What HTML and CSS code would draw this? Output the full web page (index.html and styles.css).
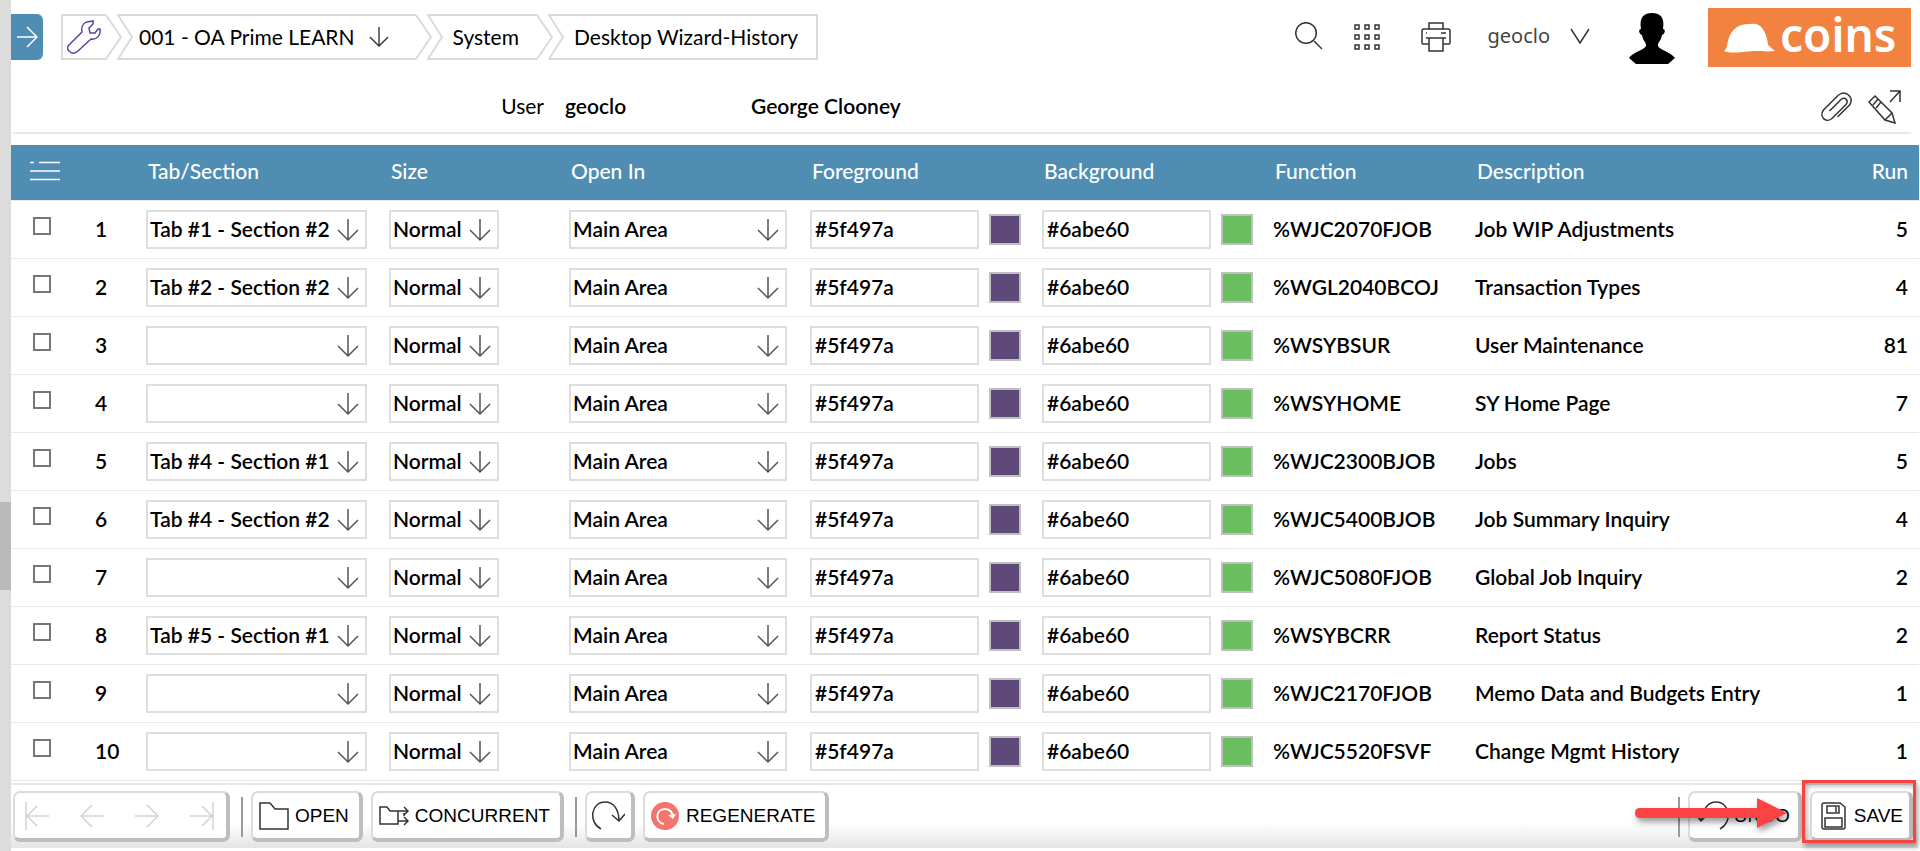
FILE: index.html
```
<!DOCTYPE html>
<html lang="en">
<head>
<meta charset="utf-8">
<title>Desktop Wizard-History</title>
<link rel="stylesheet" href="styles.css">
</head>
<body>
<svg class="sprite" aria-hidden="true">
  <symbol id="i-down" viewBox="0 0 22 24"><path d="M11 1v21M1 12l10 10 10-10"/></symbol>
  <symbol id="i-notch" viewBox="0 0 16 46"><path d="M16 1H1l14 22L1 45h15"/></symbol>
  <symbol id="i-tip" viewBox="0 0 16 46"><path d="M0 1l15 22L0 45"/></symbol>
</svg>
<div class="rail" aria-hidden="true"><div class="thumb"></div></div>
<main class="page">
  <header class="topbar">
    <button class="toggle" aria-label="Expand menu"><svg width="22" height="22" viewBox="0 0 22 22"><path d="M1 11h20M11 1l10 10-10 10"/></svg></button>
    <nav class="crumbs" aria-label="Breadcrumb">
      <a class="crumb first" href="#" aria-label="Home"><span class="body"><svg class="wrench" width="34" height="34" viewBox="0 0 34 34"><path d="M2 31c-2-2-2-4 0-6l13-13c-1-5 1-9 5-10l6-1v3l-4 4 1 5h5l3-4h2c1 6-3 11-9 10L11 31c-3 3-6 3-9 0z"/></svg></span><svg class="edge"><use href="#i-tip"/></svg></a>
      <a class="crumb" href="#"><svg class="edge"><use href="#i-notch"/></svg><span class="body company">001 - OA Prime LEARN <svg class="arrow" width="20" height="22"><use href="#i-down"/></svg></span><svg class="edge"><use href="#i-tip"/></svg></a>
      <a class="crumb" href="#"><svg class="edge"><use href="#i-notch"/></svg><span class="body system">System</span><svg class="edge"><use href="#i-tip"/></svg></a>
      <a class="crumb last" href="#"><svg class="edge"><use href="#i-notch"/></svg><span class="body">Desktop Wizard-History</span></a>
    </nav>
    <div class="tools">
      <button class="icon" aria-label="Search"><svg width="28" height="28" viewBox="0 0 28 28"><circle cx="11" cy="11" r="10.300"/><path d="M19 19l8 8"/></svg></button>
      <button class="icon apps" aria-label="Applications"><svg width="26" height="26" viewBox="0 0 26 26"><path d="M1 1h4v4H1zM11 1h4v4h-4zM21 1h4v4h-4zM1 11h4v4H1zM11 11h4v4h-4zM21 11h4v4h-4zM1 21h4v4H1zM11 21h4v4h-4zM21 21h4v4h-4z"/></svg></button>
      <button class="icon print" aria-label="Print"><svg width="30" height="30" viewBox="0 0 30 30"><path d="M8 7V1h14v6M8 22H2q-1 0-1-1V9q0-2 2-2h24q2 0 2 2v12q0 1-1 1h-6M5 16h20M8 16h14v13H8zM20 11h5M5 11h1"/></svg></button>
      <button class="icon account">geoclo <svg width="20" height="16" viewBox="0 0 20 16"><path d="M1 1l9 14 9-14"/></svg></button>
      <svg class="avatar" width="46" height="52" viewBox="0 0 46 52" role="img" aria-label="Profile"><path d="M12 17C10 5 15 1 23 1s13 4 11 16c3 0 2 5-1 6-1 6-4 7-4 10 0 5 10 5 17 13l-7 6H7l-7-6c7-8 17-8 17-13 0-3-3-4-4-10-3-1-4-6-1-6z"/></svg>
      <div class="logo"><svg width="52" height="30" viewBox="0 0 52 30" aria-hidden="true"><path d="M0 28q2-1 3-5C5 8 12 1 26 1c6-1 10 1 12 4q5 6 6 17l7 6c-8 1-13 0-22 0-12 1-22 3-29 0z"/></svg><span>coins</span></div>
    </div>
  </header>

  <section class="userbar">
    <span class="label">User</span><b class="uid">geoclo</b><b class="uname">George Clooney</b>
    <div class="actions">
      <button class="icon" aria-label="Attachments"><svg width="31" height="30" viewBox="0 0 31 30"><path d="M8.500 19L20 7.500c4-3 8 1 5 5L11.500 26c-6 6-14-1-9-8L17 3.500c7-6 16 1 12 9L16.500 25"/></svg></button>
      <button class="icon" aria-label="Edit in new window"><svg width="34" height="34" viewBox="0 0 34 34"><path d="M1 12l6-6 17 17 3 10-10-3L1 12zM5 15l5-6M8 18l5-6M17 30l7-7M22 1h10v11M32 1L22 12"/></svg></button>
    </div>
  </section>

  <table class="grid">
    <colgroup><col class="c-check"><col class="c-num"><col class="c-tab"><col class="c-size"><col class="c-open"><col class="c-fore"><col class="c-back"><col class="c-func"><col><col class="c-run"></colgroup>
    <thead><tr>
      <th scope="col" class="check"><button class="icon list" aria-label="Row options"><svg width="30" height="20" viewBox="0 0 30 20"><path d="M0 1.500h4M9 1.500h21M0 10h30M0 18.500h30"/></svg></button></th>
      <th></th><th scope="col">Tab/Section</th><th scope="col">Size</th><th scope="col">Open In</th><th scope="col">Foreground</th><th scope="col">Background</th><th scope="col">Function</th><th scope="col">Description</th><th scope="col" class="run">Run</th>
    </tr></thead>
    <tbody>
      <tr><td class="check"><input type="checkbox" aria-label="Select row 1"></td><td>1</td><td><span class="pick"><select aria-label="Tab/Section 1"><option>Tab #1 - Section #2</option></select><svg><use href="#i-down"/></svg></span></td><td><span class="pick"><select aria-label="Size 1"><option>Normal</option></select><svg><use href="#i-down"/></svg></span></td><td><span class="pick"><select aria-label="Open In 1"><option>Main Area</option></select><svg><use href="#i-down"/></svg></span></td><td><span class="hex"><input type="text" value="#5f497a" aria-label="Foreground 1"><button class="swatch fg" aria-label="Pick foreground 1"></button></span></td><td><span class="hex"><input type="text" value="#6abe60" aria-label="Background 1"><button class="swatch bg" aria-label="Pick background 1"></button></span></td><td>%WJC2070FJOB</td><td>Job WIP Adjustments</td><td class="run">5</td></tr>
      <tr><td class="check"><input type="checkbox" aria-label="Select row 2"></td><td>2</td><td><span class="pick"><select aria-label="Tab/Section 2"><option>Tab #2 - Section #2</option></select><svg><use href="#i-down"/></svg></span></td><td><span class="pick"><select aria-label="Size 2"><option>Normal</option></select><svg><use href="#i-down"/></svg></span></td><td><span class="pick"><select aria-label="Open In 2"><option>Main Area</option></select><svg><use href="#i-down"/></svg></span></td><td><span class="hex"><input type="text" value="#5f497a" aria-label="Foreground 2"><button class="swatch fg" aria-label="Pick foreground 2"></button></span></td><td><span class="hex"><input type="text" value="#6abe60" aria-label="Background 2"><button class="swatch bg" aria-label="Pick background 2"></button></span></td><td>%WGL2040BCOJ</td><td>Transaction Types</td><td class="run">4</td></tr>
      <tr><td class="check"><input type="checkbox" aria-label="Select row 3"></td><td>3</td><td><span class="pick"><select aria-label="Tab/Section 3"><option></option></select><svg><use href="#i-down"/></svg></span></td><td><span class="pick"><select aria-label="Size 3"><option>Normal</option></select><svg><use href="#i-down"/></svg></span></td><td><span class="pick"><select aria-label="Open In 3"><option>Main Area</option></select><svg><use href="#i-down"/></svg></span></td><td><span class="hex"><input type="text" value="#5f497a" aria-label="Foreground 3"><button class="swatch fg" aria-label="Pick foreground 3"></button></span></td><td><span class="hex"><input type="text" value="#6abe60" aria-label="Background 3"><button class="swatch bg" aria-label="Pick background 3"></button></span></td><td>%WSYBSUR</td><td>User Maintenance</td><td class="run">81</td></tr>
      <tr><td class="check"><input type="checkbox" aria-label="Select row 4"></td><td>4</td><td><span class="pick"><select aria-label="Tab/Section 4"><option></option></select><svg><use href="#i-down"/></svg></span></td><td><span class="pick"><select aria-label="Size 4"><option>Normal</option></select><svg><use href="#i-down"/></svg></span></td><td><span class="pick"><select aria-label="Open In 4"><option>Main Area</option></select><svg><use href="#i-down"/></svg></span></td><td><span class="hex"><input type="text" value="#5f497a" aria-label="Foreground 4"><button class="swatch fg" aria-label="Pick foreground 4"></button></span></td><td><span class="hex"><input type="text" value="#6abe60" aria-label="Background 4"><button class="swatch bg" aria-label="Pick background 4"></button></span></td><td>%WSYHOME</td><td>SY Home Page</td><td class="run">7</td></tr>
      <tr><td class="check"><input type="checkbox" aria-label="Select row 5"></td><td>5</td><td><span class="pick"><select aria-label="Tab/Section 5"><option>Tab #4 - Section #1</option></select><svg><use href="#i-down"/></svg></span></td><td><span class="pick"><select aria-label="Size 5"><option>Normal</option></select><svg><use href="#i-down"/></svg></span></td><td><span class="pick"><select aria-label="Open In 5"><option>Main Area</option></select><svg><use href="#i-down"/></svg></span></td><td><span class="hex"><input type="text" value="#5f497a" aria-label="Foreground 5"><button class="swatch fg" aria-label="Pick foreground 5"></button></span></td><td><span class="hex"><input type="text" value="#6abe60" aria-label="Background 5"><button class="swatch bg" aria-label="Pick background 5"></button></span></td><td>%WJC2300BJOB</td><td>Jobs</td><td class="run">5</td></tr>
      <tr><td class="check"><input type="checkbox" aria-label="Select row 6"></td><td>6</td><td><span class="pick"><select aria-label="Tab/Section 6"><option>Tab #4 - Section #2</option></select><svg><use href="#i-down"/></svg></span></td><td><span class="pick"><select aria-label="Size 6"><option>Normal</option></select><svg><use href="#i-down"/></svg></span></td><td><span class="pick"><select aria-label="Open In 6"><option>Main Area</option></select><svg><use href="#i-down"/></svg></span></td><td><span class="hex"><input type="text" value="#5f497a" aria-label="Foreground 6"><button class="swatch fg" aria-label="Pick foreground 6"></button></span></td><td><span class="hex"><input type="text" value="#6abe60" aria-label="Background 6"><button class="swatch bg" aria-label="Pick background 6"></button></span></td><td>%WJC5400BJOB</td><td>Job Summary Inquiry</td><td class="run">4</td></tr>
      <tr><td class="check"><input type="checkbox" aria-label="Select row 7"></td><td>7</td><td><span class="pick"><select aria-label="Tab/Section 7"><option></option></select><svg><use href="#i-down"/></svg></span></td><td><span class="pick"><select aria-label="Size 7"><option>Normal</option></select><svg><use href="#i-down"/></svg></span></td><td><span class="pick"><select aria-label="Open In 7"><option>Main Area</option></select><svg><use href="#i-down"/></svg></span></td><td><span class="hex"><input type="text" value="#5f497a" aria-label="Foreground 7"><button class="swatch fg" aria-label="Pick foreground 7"></button></span></td><td><span class="hex"><input type="text" value="#6abe60" aria-label="Background 7"><button class="swatch bg" aria-label="Pick background 7"></button></span></td><td>%WJC5080FJOB</td><td>Global Job Inquiry</td><td class="run">2</td></tr>
      <tr><td class="check"><input type="checkbox" aria-label="Select row 8"></td><td>8</td><td><span class="pick"><select aria-label="Tab/Section 8"><option>Tab #5 - Section #1</option></select><svg><use href="#i-down"/></svg></span></td><td><span class="pick"><select aria-label="Size 8"><option>Normal</option></select><svg><use href="#i-down"/></svg></span></td><td><span class="pick"><select aria-label="Open In 8"><option>Main Area</option></select><svg><use href="#i-down"/></svg></span></td><td><span class="hex"><input type="text" value="#5f497a" aria-label="Foreground 8"><button class="swatch fg" aria-label="Pick foreground 8"></button></span></td><td><span class="hex"><input type="text" value="#6abe60" aria-label="Background 8"><button class="swatch bg" aria-label="Pick background 8"></button></span></td><td>%WSYBCRR</td><td>Report Status</td><td class="run">2</td></tr>
      <tr><td class="check"><input type="checkbox" aria-label="Select row 9"></td><td>9</td><td><span class="pick"><select aria-label="Tab/Section 9"><option></option></select><svg><use href="#i-down"/></svg></span></td><td><span class="pick"><select aria-label="Size 9"><option>Normal</option></select><svg><use href="#i-down"/></svg></span></td><td><span class="pick"><select aria-label="Open In 9"><option>Main Area</option></select><svg><use href="#i-down"/></svg></span></td><td><span class="hex"><input type="text" value="#5f497a" aria-label="Foreground 9"><button class="swatch fg" aria-label="Pick foreground 9"></button></span></td><td><span class="hex"><input type="text" value="#6abe60" aria-label="Background 9"><button class="swatch bg" aria-label="Pick background 9"></button></span></td><td>%WJC2170FJOB</td><td>Memo Data and Budgets Entry</td><td class="run">1</td></tr>
      <tr><td class="check"><input type="checkbox" aria-label="Select row 10"></td><td>10</td><td><span class="pick"><select aria-label="Tab/Section 10"><option></option></select><svg><use href="#i-down"/></svg></span></td><td><span class="pick"><select aria-label="Size 10"><option>Normal</option></select><svg><use href="#i-down"/></svg></span></td><td><span class="pick"><select aria-label="Open In 10"><option>Main Area</option></select><svg><use href="#i-down"/></svg></span></td><td><span class="hex"><input type="text" value="#5f497a" aria-label="Foreground 10"><button class="swatch fg" aria-label="Pick foreground 10"></button></span></td><td><span class="hex"><input type="text" value="#6abe60" aria-label="Background 10"><button class="swatch bg" aria-label="Pick background 10"></button></span></td><td>%WJC5520FSVF</td><td>Change Mgmt History</td><td class="run">1</td></tr>
    </tbody>
  </table>

  <footer class="footer">
    <div class="box pager">
      <button aria-label="First page" disabled><svg width="24" height="28" viewBox="0 0 24 28"><path d="M1 0v28M2 14h22M12 4L2 14l10 10"/></svg></button>
      <button aria-label="Previous page" disabled><svg width="24" height="28" viewBox="0 0 24 28"><path d="M1 14h23M12 3L1 14l11 11"/></svg></button>
      <button aria-label="Next page" disabled><svg width="24" height="28" viewBox="0 0 24 28"><path d="M0 14h23M12 3l11 11-11 11"/></svg></button>
      <button aria-label="Last page" disabled><svg width="24" height="28" viewBox="0 0 24 28"><path d="M23 0v28M0 14h22M12 4l10 10-10 10"/></svg></button>
    </div>
    <span class="sep"></span>
    <button class="box"><svg width="30" height="28" viewBox="0 0 30 28"><path d="M1 27V1h10l5 6h13v20z"/></svg>OPEN</button>
    <button class="box"><svg width="30" height="28" viewBox="0 0 30 28"><path d="M1 22V5h7l3 4h8v13zM19 9h10M25 5l4 4-4 4M25 14v-3M19 19h10M25 15l4 4-4 4"/></svg>CONCURRENT</button>
    <span class="sep"></span>
    <button class="box round" aria-label="Refresh"><svg width="34" height="30" viewBox="0 0 34 30"><path d="M10 28C-3 21 0 1 14 1c9 0 14 8 14 19M21 14l7 6 6-7"/></svg></button>
    <button class="box regen"><svg width="28" height="28" viewBox="0 0 28 28"><circle cx="14" cy="14" r="14" class="dot"/><path class="swirl" d="M13 22C4 21 4 7 14 7c5 0 8 4 8 8"/><path class="head" d="M17 13l8-1-3 5z"/></svg>REGENERATE</button>
    <div class="right">
      <span class="sep"></span>
      <button class="box undo"><svg width="34" height="30" viewBox="0 0 34 30"><path d="M24 28c13-7 10-27-4-27C11 1 7 8 5 20M0 14l5 6 7-7"/></svg>UNDO</button>
      <div class="saveslot">
        <button class="box save"><svg width="25" height="28" viewBox="0 0 25 28"><path d="M3 1h16l5 4v20q0 2-2 2H3q-2 0-2-2V3q0-2 2-2zM6 4h12v7H6zM15 5v5M4 16h17v9H4z"/></svg>SAVE</button>
        <span class="highlight"></span>
        <svg class="pointer" width="160" height="44" viewBox="0 0 160 44" aria-hidden="true"><path d="M7 12H124V2l30 15-30 15V22H7Q2 22 2 17t5-5z"/></svg>
      </div>
    </div>
  </footer>
</main>
</body>
</html>
```

FILE: styles.css
```
* { box-sizing: border-box; }

body {
  margin: 0;
  display: flex;
  min-height: 100vh;
  background: #fff;
  color: #000;
  font: 21px/26px Lato, "Liberation Sans", sans-serif;
}

svg { fill: none; stroke: #333; stroke-width: 1.5; flex: none; display: block; }
.sprite { position: absolute; width: 0; height: 0; }
button, select, input { font: inherit; color: inherit; margin: 0; }
button { border: 0; background: none; padding: 0; cursor: pointer; }

/* scroll rail */
.rail { position: relative; flex: none; width: 11px; background: #dcdcdc; }
.thumb { position: absolute; left: 0; right: 0; top: 59%; height: 88px; background: #b9b9b9; }

.page { flex: 1; min-width: 0; }

/* top bar */
.topbar { display: flex; align-items: flex-start; height: 80px; padding-right: 9px; }
.toggle {
  display: grid; place-items: center;
  width: 32px; height: 46px; margin: 14px 18px 0 0;
  background: #4f8db3; border-radius: 0 6px 6px 0;
}
.toggle svg { stroke: #fff; }

.crumbs { display: flex; margin-top: 14px; white-space: nowrap; }
.crumb { display: flex; height: 46px; color: #000; text-decoration: none; }
.crumb + .crumb { margin-left: -5px; }
.crumb svg.edge { width: 16px; height: 46px; stroke: #dadada; stroke-width: 2; }
.crumb .body {
  display: flex; align-items: center; gap: 14px; padding: 0 18px 0 10px;
  border: solid #dadada; border-width: 2px 0;
}
.crumb.first .body { padding: 0 5px 0 4px; border-left-width: 2px; }
.crumb.last .body { border-right-width: 2px; }
.crumb .company { padding: 0 27px 0 6px; }
.wrench { stroke: #5b3fa5; }

.tools { display: flex; align-items: flex-start; margin-left: auto; }
.icon { display: flex; align-items: center; }
.tools .icon { margin-top: 22px; }
.tools .icon.apps { margin: 24px 0 0 31px; }
.tools .icon.print { margin-left: 41px; }
.tools .icon.account {
  gap: 20px; margin: 22px 0 0 36px;
  color: #444; font: 20px/28px "Noto Sans", sans-serif;
}
.avatar { margin: 12px 0 0 39px; stroke: none; fill: #000; }
.logo {
  display: flex; align-items: center; gap: 4px;
  width: 203px; height: 59px; margin: 8px 0 0 33px; padding-left: 16px;
  background: #f28240; color: #fff;
  font: 600 46px/46px "Noto Sans", sans-serif;
}
.logo svg { fill: #fff; stroke: none; }
.logo span { padding-bottom: 7px; }

/* user bar */
.userbar {
  display: flex; align-items: center; height: 54px; margin: 0 9px 11px 2px;
  border-bottom: 2px solid #e8e8e8;
}
.userbar b { font-weight: 600; }
.label { flex: none; width: 531px; text-align: right; }
.uid { width: 186px; margin-left: 21px; }
.actions { display: flex; gap: 16px; margin-left: auto; padding: 2px 9px 0 0; }

/* grid */
.grid { width: calc(100% - 1px); table-layout: fixed; border-collapse: separate; border-spacing: 0; }
.c-check { width: 74px; }
.c-num { width: 51px; }
.c-tab { width: 243px; }
.c-size { width: 180px; }
.c-open { width: 241px; }
.c-fore { width: 232px; }
.c-back { width: 231px; }
.c-func { width: 202px; }
.c-run { width: 90px; }
.grid th, .grid td {
  padding: 0 10px 2px; border-bottom: 1px solid #e8e8e8;
  text-align: left; white-space: nowrap; vertical-align: middle;
}
.grid th { height: 56px; padding: 0 12px 3px; background: #4f8db3; color: #fff; font-weight: 500; }
.grid td { height: 58px; font-weight: 600; }
.grid td:has(span) { padding-bottom: 0; }
.grid .run { padding-right: 11px; text-align: right; }
.grid th.check { padding-left: 19px; }
.grid td.check { padding: 0 0 7px 22px; }
.list svg { stroke: #fff; }

input[type="checkbox"] {
  appearance: none; display: block; width: 18px; height: 18px;
  border: 2px solid #777; background: #fff;
}
.pick { display: grid; align-items: center; }
.pick > * { grid-area: 1 / 1; }
.pick select {
  appearance: none; width: 100%; height: 39px; padding: 0 2px 2px; border: 2px solid #dedede;
  border-radius: 0; background: #fff; font-weight: 600;
}
.pick svg {
  justify-self: end; width: 22px; height: 24px; margin-right: 8px;
  stroke: #555; pointer-events: none;
}
td:nth-child(3) .pick { width: 221px; }
td:nth-child(4) .pick { width: 110px; }
td:nth-child(5) .pick { width: 218px; }
.hex { display: flex; align-items: center; gap: 10px; }
.hex input {
  width: 169px; height: 39px; padding: 0 3px 2px; border: 2px solid #dedede;
  border-radius: 0; background: #fff; font-weight: 600;
}
.swatch { width: 32px; height: 31px; border: 2px solid #c0c0c0; }
.swatch.fg { background: #5f497a; }
.swatch.bg { background: #6abe60; }

/* footer */
.footer {
  display: flex; align-items: center; margin: 2px 2px 3px 0; padding: 6px 0 6px 2px;
  border-top: 2px solid #e8e8e8;
  background: linear-gradient(#fff 60%, #e4e4e4);
  font: 19px/24px "Liberation Sans", Arial, sans-serif;
}
.box {
  display: flex; align-items: center; gap: 6px; height: 51px; padding: 0 10px 0 6px;
  background: #fff; border: 2px solid #dcdcdc; border-right: 4px solid #bebebe;
  border-bottom: 4px solid #bebebe; border-radius: 7px;
}
.box + .box { margin-left: 8px; }
.pager { gap: 31px; padding: 0 12px 0 10px; }
.pager svg { stroke: #d2d2d2; }
.sep { width: 2px; height: 40px; margin: 0 8px 0 11px; background: #9a9a9a; }
.round { padding: 0 6px 0 4px; }
.regen { gap: 7px; }
.regen .dot { fill: #f3756d; stroke: none; }
.regen .swirl { stroke: #fff; stroke-width: 2; }
.regen .head { fill: #fff; stroke: none; }
.right { display: flex; align-items: center; margin-left: auto; padding-right: 5px; }
.undo { gap: 4px; padding-right: 8px; }
.saveslot { position: relative; margin-left: 8px; }
.save { gap: 8px; padding: 0 6px 0 9px; }
.highlight {
  position: absolute; inset: -11px -3px -1px -8px; border: 3px solid #f84343;
  box-shadow: 2px 4px 5px rgba(0, 0, 0, .35), inset 2px 3px 5px rgba(0, 0, 0, .3);
  pointer-events: none;
}
.pointer {
  position: absolute; right: 100%; top: 5px; margin-right: 17px;
  fill: #fb4343; stroke: none; filter: drop-shadow(2px 4px 3px rgba(0, 0, 0, .4));
  pointer-events: none;
}
```
